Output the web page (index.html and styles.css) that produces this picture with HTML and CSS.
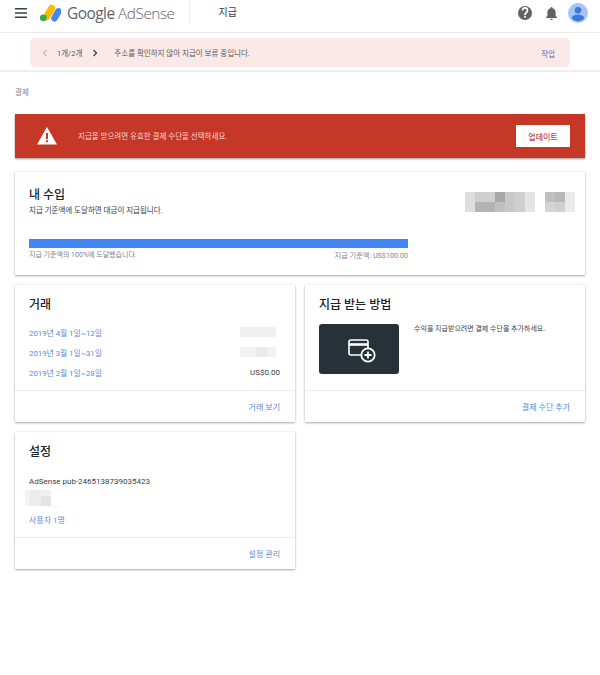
FILE: index.html
```html
<!DOCTYPE html>
<html lang="ko">
<head>
<meta charset="utf-8">
<title>Google AdSense 지급</title>
<link rel="stylesheet" href="styles.css">
</head>
<body>
<header class="topbar">
  <svg class="menu" width="12" height="10" viewBox="0 0 12 10"><path d="M0 0h12v1.600H0zM0 4.200h12v1.600H0zM0 8.400h12V10H0z" fill="#3c4043"/></svg>
  <svg class="logo" width="22" height="22" viewBox="0 0 22 22">
    <rect x="6.700" y="2" width="7" height="17" rx="3.500" transform="rotate(30 10.200 10.500)" fill="#fbbc04"/>
    <rect x="14.200" y="5.600" width="6.600" height="14.400" rx="3.300" transform="rotate(30 17.500 12.800)" fill="#4285f4"/>
    <circle cx="4.300" cy="15.800" r="3.400" fill="#34a853"/>
  </svg>
  <div class="brand"><span>Google</span> <span class="brand-light">AdSense</span></div>
  <div class="divider"></div>
  <div class="page-title">지급</div>
  <div class="top-icons">
    <svg width="14" height="14" viewBox="0 0 24 24"><path fill="#5f6368" d="M12 0a12 12 0 1 0 0 24 12 12 0 0 0 0-24zm1.400 20h-2.800v-2.800h2.800V20zm2.900-8.600-1.300 1.300c-1 1-1.600 1.900-1.600 3h-2.800v-.6c0-1.500.6-2.800 1.600-3.800l1.700-1.800c.5-.5.8-1.200.8-2a2.800 2.800 0 0 0-5.600 0H6.300a5.700 5.700 0 0 1 11.400 0c0 1.700-.6 3-1.400 3.900z"/></svg>
    <svg class="bell" width="11" height="13" viewBox="0 0 16 19"><path fill="#5f6368" d="M8 19a2 2 0 0 0 2-2H6a2 2 0 0 0 2 2zm6-6V8c0-3-1.600-5.500-4.500-6.200V1.500a1.500 1.500 0 0 0-3 0v.3C3.600 2.500 2 5 2 8v5l-2 2v1h16v-1l-2-2z"/></svg>
    <svg class="avatar" width="20" height="20" viewBox="0 0 20 20"><circle cx="10" cy="10" r="10" fill="#a5c5f7"/><circle cx="10" cy="7.300" r="3.300" fill="#3f75dc"/><path d="M3.700 15.300c0-2.600 4-3.800 6.300-3.800s6.300 1.200 6.300 3.800c-1.400 1.900-3.700 3-6.300 3s-4.900-1.100-6.300-3z" fill="#3f75dc"/></svg>
  </div>
</header>

<section class="notice-bar">
  <div class="notice">
    <svg width="6" height="8" viewBox="0 0 6 8"><path d="M4.500 1 1.500 4l3 3" fill="none" stroke="#c9b5b2" stroke-width="1.100"/></svg>
    <span class="pager">1개/2개</span>
    <svg class="next" width="6" height="8" viewBox="0 0 6 8"><path d="M1.500 1l3 3-3 3" fill="none" stroke="#3c4043" stroke-width="1.300"/></svg>
    <span class="notice-text">주소를 확인하지 않아 지급이 보류 중입니다.</span>
    <a class="notice-action">작업</a>
  </div>
</section>

<main class="content">
  <div class="crumb">결제</div>

  <div class="alert">
    <svg width="20" height="18" viewBox="0 0 20 18"><path d="M10 0 20 17.500H0z" fill="#fff"/><path d="M9 6h2v6H9zM9 13.200h2v2H9z" fill="#c53727"/></svg>
    <span class="alert-text">지급을 받으려면 유효한 결제 수단을 선택하세요.</span>
    <button class="alert-btn">업데이트</button>
  </div>

  <section class="card earnings">
    <div class="earn-head">
      <div>
        <h2 class="card-title">내 수입</h2>
        <p class="sub">지급 기준액에 도달하면 대금이 지급됩니다.</p>
      </div>
      <svg class="mosaic" width="110" height="20" viewBox="0 0 110 20">
        <path fill="#dedede" d="M0 0h10v20H0z"/><path fill="#cfcfcf" d="M10 0h20v10H10z"/><path fill="#b3b3b3" d="M10 10h20v10H10z"/>
        <path fill="#a8a8a8" d="M30 0h10v10H30z"/><path fill="#c0c0c0" d="M30 10h10v10H30z"/><path fill="#c8c8c8" d="M40 0h10v20H40z"/>
        <path fill="#cfcfcf" d="M50 0h10v20H50z"/><path fill="#e4e4e4" d="M60 0h10v20H60z"/>
        <path fill="#d4d4d4" d="M80 0h10v20H80z"/><path fill="#b8b8b8" d="M90 0h10v10H90z"/><path fill="#d0d0d0" d="M90 10h10v10H90z"/><path fill="#ebebeb" d="M100 0h10v20h-10z"/><path fill="#c0c0c0" d="M80 0h10v10H80z"/>
      </svg>
    </div>
    <div class="progress"><div class="progress-fill"></div></div>
    <div class="progress-labels"><span>지급 기준액의 100%에 도달했습니다.</span><span class="threshold">지급 기준액: US$100.00</span></div>
  </section>

  <div class="two-col">
    <section class="card split">
      <div class="card-body">
        <h2 class="card-title">거래</h2>
        <ul class="tx-list">
          <li><a>2019년 4월 1일~12일</a><i class="blur blur-a"></i></li>
          <li><a>2019년 3월 1일~31일</a><i class="blur blur-b"></i></li>
          <li><a>2019년 2월 1일~28일</a><span class="amount">US$0.00</span></li>
        </ul>
      </div>
      <div class="card-foot"><a>거래 보기</a></div>
    </section>
    <section class="card split">
      <div class="card-body">
        <h2 class="card-title">지급 받는 방법</h2>
        <div class="pay-row">
          <div class="pay-tile">
            <svg width="28" height="24" viewBox="0 0 28 24" fill="none" stroke="#fff" stroke-width="1.600">
              <path d="M14 16H3a2 2 0 0 1-2-2V3a2 2 0 0 1 2-2h15a2 2 0 0 1 2 2v6"/>
              <path d="M1 5.500h19" stroke-width="2.600"/>
              <circle cx="20" cy="16" r="6.700" stroke-width="1.800"/>
              <path d="M20 12.500v7M16.500 16h7" stroke-width="1.800"/>
            </svg>
          </div>
          <p class="pay-text">수익을 지급받으려면 결제 수단을 추가하세요.</p>
        </div>
      </div>
      <div class="card-foot"><a>결제 수단 추가</a></div>
    </section>
    <section class="card split">
      <div class="card-body">
        <h2 class="card-title">설정</h2>
        <p class="pub">AdSense pub-2465138739035423</p>
        <svg class="pub-blur" width="36" height="17" viewBox="0 0 36 17"><path fill="#f3f3f3" d="M0 0h5v16H0z"/><path fill="#ececec" d="M5 0h16v16H5z"/><path fill="#e4e4e4" d="M16 6h10v10H16z"/><path fill="#f0f0f0" d="M16 0h10v6H16z"/><path fill="#f6f6f6" d="M26 16h10v1H26z"/></svg>
        <a class="users">사용자 1명</a>
      </div>
      <div class="card-foot"><a>설정 관리</a></div>
    </section>
  </div>
</main>
</body>
</html>
```
FILE: styles.css
```css
* { box-sizing: border-box; }
html, body { margin: 0; padding: 0; }
body {
  width: 600px;
  min-height: 675px;
  background: #fff;
  color: #202124;
  font-family: Roboto, "Noto Sans CJK KR", sans-serif;
  font-size: 8px;
  overflow: hidden;
}
a { color: #5a8ad8; }
h2, p, ul { margin: 0; padding: 0; }

.topbar {
  height: 33px;
  display: flex;
  align-items: flex-start;
  border-bottom: 1px solid #ebebeb;
  overflow: hidden;
}
.menu { margin: 8px 0 0 15px; }
.logo { margin: 2px 0 0 12px; flex: none; }
.brand {
  margin: 1px 0 0 6px;
  font-size: 15.400px;
  line-height: 25px;
  color: #5f6368;
  white-space: pre;
  font-family: "Open Sans", Roboto, sans-serif;
  letter-spacing: -0.5px;
}
.brand-light { font-weight: 300; }
.divider { width: 1px; height: 24px; margin-left: 14px; background: #eee; }
.page-title { margin: 6px 0 0 29px; font-size: 10px; line-height: 14px; color: #3c4043; }
.top-icons { margin-left: auto; margin-right: 12px; display: flex; align-items: center; gap: 14px; height: 26px; }
.bell { margin-right: -3px; }

.notice-bar { height: 39px; padding: 5px 30px 0; border-bottom: 2px solid #eeeeee; }
.notice {
  height: 29px;
  display: flex;
  align-items: center;
  padding: 0 15px 0 12px;
  background: #fbe9e7;
  border-radius: 5px;
  font-size: 7.500px;
  color: #5a5a5a;
}
.pager { margin: 0 10px 0 9px; }
.notice-text { margin-left: 16px; }
.notice-action { margin: 2px 0 0 auto; color: #4a72c4; }

.content { padding: 0 15px; }
.crumb { margin-top: 15px; height: 12px; line-height: 12px; font-size: 7.500px; color: #80868b; }

.alert {
  margin-top: 15px;
  height: 44px;
  display: flex;
  align-items: center;
  padding: 0 15px 0 22px;
  background: #c53727;
  box-shadow: 0 1px 2px rgba(0,0,0,.4);
  color: #f6d5d0;
  font-size: 7.500px;
}
.alert-text { margin-left: 21px; margin-top: -1px; }
.alert-btn {
  margin-left: auto;
  width: 54px;
  height: 22px;
  padding: 0;
  border: 0;
  background: #fff;
  color: #b5493c;
  font: 500 8px Roboto, "Noto Sans CJK KR", sans-serif;
}

.card {
  background: #fff;
  box-shadow: 0 1px 2px rgba(0,0,0,.32), 0 0 3px rgba(0,0,0,.07);
}
.card-title { font-size: 12px; line-height: 16px; font-weight: 500; color: #202124; }

.earnings { margin-top: 14px; height: 103px; padding: 15px 10px 0 14px; }
.earn-head { display: flex; justify-content: space-between; align-items: flex-start; height: 52px; }
.sub { margin-top: 2px; font-size: 7.500px; line-height: 11px; color: #3c4043; }
.mosaic { margin-top: 5px; }
.progress { width: 379px; height: 9px; background: #e0e0e0; }
.progress-fill { width: 100%; height: 100%; background: #4285f4; }
.progress-labels {
  width: 379px;
  margin-top: 2px;
  display: flex;
  justify-content: space-between;
  font-size: 7px;
  line-height: 11px;
  color: #80868b;
}
.threshold { font-size: 7.200px; }

.two-col {
  margin-top: 10px;
  display: grid;
  grid-template-columns: 280px 280px;
  grid-auto-rows: 137px;
  gap: 10px;
}
.split { display: flex; flex-direction: column; }
.card-body { flex: 1; padding: 12px 15px 0 14px; }
.card-foot {
  height: 32px;
  border-top: 1px solid #eaeaea;
  padding-right: 15px;
  display: flex;
  align-items: center;
  justify-content: flex-end;
  font-size: 8px;
}

.tx-list { list-style: none; margin-top: 9px; }
.tx-list li {
  height: 20px;
  display: flex;
  align-items: center;
  justify-content: space-between;
  font-size: 7.800px;
}
.amount { color: #3c4043; font-size: 8px; }
.blur { display: block; width: 36px; height: 10px; margin-right: 4px; }
.blur-a { background: #f0f0f0; }
.blur-b { background: linear-gradient(90deg, #f3f3f3 0 45%, #e9e9e9 45% 75%, #f3f3f3 75%); }

.pay-row { margin-top: 11px; display: flex; }
.pay-tile {
  flex: none;
  width: 80px;
  height: 50px;
  background: #263238;
  border-radius: 3px;
  display: flex;
  align-items: center;
  justify-content: center;
}
.pay-tile svg { margin: 3px 0 0 6px; }
.pay-text { margin: 0 0 0 15px; font-size: 7px; line-height: 11px; color: #3c4043; }

.pub { margin-top: 16px; font-size: 8px; line-height: 11px; color: #3c4043; }
.pub-blur { display: block; margin: 3px 0 0 -4px; }
.users { display: block; margin-top: 8px; font-size: 8px; line-height: 11px; }
```
